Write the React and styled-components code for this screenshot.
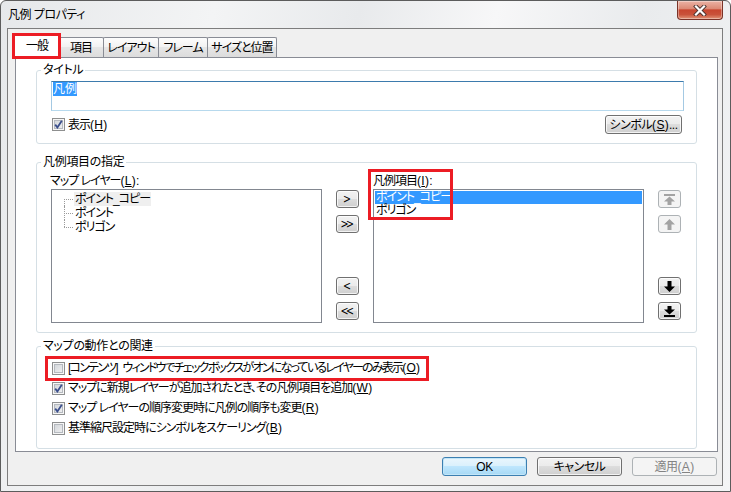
import styled, { createGlobalStyle, css } from 'styled-components'

const GlobalStyle = createGlobalStyle`
  html, body {
    margin: 0;
    padding: 0;
    background: #fff;
  }
  body {
    font-family: "Liberation Sans", "Noto Sans CJK JP", sans-serif;
    font-size: 12px;
    font-feature-settings: "palt";
    letter-spacing: -1px;
    color: #000;
  }
  * {
    box-sizing: border-box;
  }
`

const Window = styled.div`
  position: relative;
  width: 731px;
  height: 492px;
  display: flex;
  flex-direction: column;
  padding: 0 7px 5px 6px;
  border: 1px solid #5c5c5c;
  border-radius: 6px 6px 0 0;
  background: linear-gradient(105deg, #e6e8ea 0%, #f3f4f5 25%, #e8eaec 42%, #f7f7f8 58%, #e9ebed 75%, #f4f5f6 100%);
`

const TitleBar = styled.div`
  height: 27px;
  display: flex;
  justify-content: space-between;
  align-items: flex-start;
`

const Title = styled.div`
  margin: 7px 0 0 1px;
  line-height: 14px;
  letter-spacing: -0.5px;
`

const CloseButton = styled.div`
  width: 46px;
  height: 19px;
  display: flex;
  align-items: center;
  justify-content: center;
  border: 1px solid #7a3328;
  border-top: none;
  border-radius: 0 0 4px 4px;
  background: linear-gradient(#ebb3a5 0%, #dc8a76 42%, #c8462f 50%, #c9523a 75%, #e19477 100%);
  box-shadow: inset 0 0 0 1px rgba(255, 255, 255, 0.35);
`

const Client = styled.div`
  flex: 1;
  display: flex;
  flex-direction: column;
  padding: 6px 4px 0 7px;
  border: 1px solid #7d7d7d;
  background: #f0f0f0;
`

const TabRow = styled.div`
  position: relative;
  z-index: 1;
  height: 22px;
  display: flex;
  align-items: flex-end;
`

const Tab = styled.div`
  position: relative;
  width: ${p => p.$w}px;
  height: 20px;
  display: flex;
  align-items: center;
  justify-content: center;
  margin-left: -1px;
  border: 1px solid #898c95;
  border-bottom: none;
  border-radius: 2px 2px 0 0;
  background: linear-gradient(#fdfdfd, #f1f1f1 50%, #e6e6e6 50%, #dcdcdc);
  line-height: 14px;
  white-space: nowrap;

  ${p => p.$active && css`
    z-index: 2;
    height: 23px;
    margin: 0 -2px -1px -2px;
    padding-bottom: 2px;
    background: #fff;
  `}
`

const Panel = styled.div`
  height: 395px;
  display: flex;
  flex-direction: column;
  padding: 5px 20px 0;
  border: 1px solid #898c95;
  background: #fff;
`

const Group = styled.fieldset`
  margin: ${p => p.$top || 0}px 0 0;
  padding: 0;
  min-inline-size: 0;
  border: 1px solid #d5dfe5;
  border-radius: 3px;
`

const Legend = styled.legend`
  margin-left: 4px;
  padding: 0 2px;
  line-height: 14px;
  letter-spacing: -0.3px;
`

const GroupBody = styled.div`
  padding: ${p => p.$pad};
`

const TextBox = styled.div`
  height: 30px;
  padding: 1px;
  border: 1px solid;
  border-color: #3d7bad #a4c9e3 #b7d9ed #a4c9e3;
  background: #fff;
  line-height: 12px;
  letter-spacing: 0;
`

const Selected = styled.span`
  background: #3399ff;
  color: #fff;
`

const ShowRow = styled.div`
  height: 19px;
  margin-top: 4px;
  padding: 0 2px 0 1px;
  display: flex;
  align-items: center;
  justify-content: space-between;
`

const CheckLabel = styled.label`
  display: inline-flex;
  align-items: center;
  gap: 3px;
  line-height: 14px;
  white-space: nowrap;
  letter-spacing: ${p => (p.$tight ? '-1.8px' : 'inherit')};
`

const CheckBoxFrame = styled.span`
  width: 13px;
  height: 13px;
  flex: none;
  display: flex;
  border: 1px solid #8e8f8f;
  background: linear-gradient(135deg, #cdd1d6, #f4f4f4);
  box-shadow: inset 0 0 0 1px #f6f6f6, inset 0 0 0 2px #b5b9bf;
`

const Latin = styled.span`
  letter-spacing: 0.3px;
`

const Button = styled.button`
  width: ${p => p.$w}px;
  height: ${p => p.$h || 19}px;
  padding: 0;
  display: flex;
  align-items: center;
  justify-content: center;
  font: inherit;
  font-feature-settings: "palt";
  letter-spacing: -0.5px;
  line-height: 14px;
  color: #000;
  border: 1px solid #707070;
  border-radius: 3px;
  background: linear-gradient(#f2f2f2, #ebebeb 50%, #dddddd 50%, #cfcfcf);
  box-shadow: inset 0 0 0 1px rgba(255, 255, 255, 0.75);

  ${p => p.$default && css`
    border-color: #3c7fb1;
    background: linear-gradient(#eaf6fd, #d9f0fc 50%, #bee6fd 50%, #a7d9f5);
    box-shadow: inset 0 0 0 1px #c2e6f8;
  `}

  ${p => p.disabled && css`
    color: #838383;
    border-color: #adb2b5;
    background: #f4f4f4;
    box-shadow: none;
  `}
`

const ListsGrid = styled.div`
  display: grid;
  grid-template-columns: 271px 23px 271px 23px;
  grid-template-rows: 15px 134px;
  column-gap: 14px;
`

const FieldLabel = styled.div`
  grid-column: ${p => p.$col};
  grid-row: 1;
  margin-left: ${p => p.$shift || 0}px;
  line-height: 15px;
  white-space: nowrap;
`

const ListBox = styled.div`
  grid-column: ${p => p.$col};
  grid-row: 2;
  padding: ${p => p.$pad};
  border: 1px solid #828790;
  background: #fff;
`

const Tree = styled.div`
  padding-left: 12px;
`

const TreeItem = styled.div`
  position: relative;
  height: 14px;
  padding-left: 10px;
  line-height: 14px;
  white-space: nowrap;

  &::before {
    content: '';
    position: absolute;
    left: 0;
    top: 7px;
    width: 9px;
    border-top: 1px dotted #9a9a9a;
  }

  &::after {
    content: '';
    position: absolute;
    left: 0;
    top: 0;
    bottom: 0;
    border-left: 1px dotted #9a9a9a;
  }

  &:first-child::after {
    top: 7px;
  }

  &:last-child::after {
    bottom: 7px;
  }
`

const TreeText = styled.span`
  padding: 0 1px;
  background: ${p => (p.$selected ? '#efefef' : 'transparent')};
`

const ListItem = styled.div`
  height: 13px;
  padding-left: 1px;
  line-height: 13px;
  white-space: nowrap;
  background: ${p => (p.$selected ? '#3399ff' : 'transparent')};
  color: ${p => (p.$selected ? '#fff' : '#000')};
`

const ButtonColumn = styled.div`
  grid-column: ${p => p.$col};
  grid-row: 2;
  display: flex;
  flex-direction: column;
  justify-content: space-between;
  padding: 1px 0 3px;
`

const ButtonPair = styled.div`
  display: flex;
  flex-direction: column;
  gap: 7px;
`

const Chevron = styled.span`
  font-family: "DejaVu Sans", sans-serif;
  font-size: 12px;
  transform: scaleX(0.8);
  letter-spacing: ${p => (p.$double ? '-3px' : '0')};
  margin: -1px ${p => (p.$double ? '3px' : '0')} 0 0;
`

const CheckRow = styled.div`
  height: 20px;
  display: flex;
  align-items: center;
`

const DialogButtons = styled.div`
  margin-top: 5px;
  padding-right: 1px;
  display: flex;
  justify-content: flex-end;
  gap: 10px;
`

const Mark = styled.div`
  position: absolute;
  left: ${p => p.$x}px;
  top: ${p => p.$y}px;
  width: ${p => p.$w}px;
  height: ${p => p.$h}px;
  border: 3px solid #ec1c24;
  pointer-events: none;
  z-index: 5;
`

const Key = ({ k }) => (
  <Latin>(<u>{k}</u>)</Latin>
)

const CheckBox = ({ checked }) => (
  <CheckBoxFrame>
    {checked && (
      <svg width="11" height="11" viewBox="0 0 11 11">
        <path d="M2.2 5.6 L4.4 8.4 L8.8 1.8" fill="none" stroke="#3b4f8c" strokeWidth="1.8" />
      </svg>
    )}
  </CheckBoxFrame>
)

const Check = ({ checked, tight, children }) => (
  <CheckLabel $tight={tight}>
    <CheckBox checked={checked} />
    <span>{children}</span>
  </CheckLabel>
)

const arrows = {
  top: (
    <>
      <rect x="1" y="1" width="11" height="2" />
      <polygon points="6.5,3.5 12,8.5 8.5,8.5 8.5,12 4.5,12 4.5,8.5 1,8.5" />
    </>
  ),
  up: <polygon points="6.5,1 12,6.5 8.5,6.5 8.5,12 4.5,12 4.5,6.5 1,6.5" />,
  down: <polygon points="4.5,1 8.5,1 8.5,6.5 12,6.5 6.5,12 1,6.5 4.5,6.5" />,
  bottom: (
    <>
      <polygon points="4.5,1 8.5,1 8.5,4.5 12,4.5 6.5,9.5 1,4.5 4.5,4.5" />
      <rect x="1" y="10" width="11" height="2" />
    </>
  ),
}

const MoveButton = ({ dir, disabled }) => (
  <Button $w={23} $h={18} disabled={disabled}>
    <svg width="13" height="13" viewBox="0 0 13 13" fill={disabled ? '#a3a3a3' : '#000'}>
      {arrows[dir]}
    </svg>
  </Button>
)

const App = () => {
  return (
    <>
      <GlobalStyle />
      <Window>
        <TitleBar>
          <Title>凡例 プロパティ</Title>
          <CloseButton>
            <svg width="14" height="11" viewBox="0 0 14 11">
              <path d="M3 1.5 L11 9.5 M11 1.5 L3 9.5" stroke="#4b3430" strokeWidth="4" strokeLinecap="square" />
              <path d="M3 1.5 L11 9.5 M11 1.5 L3 9.5" stroke="#fff" strokeWidth="2.2" strokeLinecap="square" />
            </svg>
          </CloseButton>
        </TitleBar>

        <Client>
          <TabRow>
            <Tab $active $w={48}>一般</Tab>
            <Tab $w={46}>項目</Tab>
            <Tab $w={56}>レイアウト</Tab>
            <Tab $w={50}>フレーム</Tab>
            <Tab $w={70}>サイズと位置</Tab>
          </TabRow>

          <Panel>
            <Group>
              <Legend>タイトル</Legend>
              <GroupBody $pad="4px 12px 9px 14px">
                <TextBox>
                  <Selected>凡例</Selected>
                </TextBox>
                <ShowRow>
                  <Check checked>表示<Key k="H" /></Check>
                  <Button $w={77}>シンボル<Key k="S" />...</Button>
                </ShowRow>
              </GroupBody>
            </Group>

            <Group $top={11}>
              <Legend>凡例項目の指定</Legend>
              <GroupBody $pad="5px 0 9px 14px">
                <ListsGrid>
                  <FieldLabel $col={1} $shift={-1}>マップ レイヤー<Key k="L" />:</FieldLabel>
                  <ListBox $col={1} $pad="2px 0 0">
                    <Tree>
                      <TreeItem><TreeText $selected>ポイント_コピー</TreeText></TreeItem>
                      <TreeItem><TreeText>ポイント</TreeText></TreeItem>
                      <TreeItem><TreeText>ポリゴン</TreeText></TreeItem>
                    </Tree>
                  </ListBox>

                  <ButtonColumn $col={2}>
                    <ButtonPair>
                      <Button $w={23} $h={18}><Chevron>&gt;</Chevron></Button>
                      <Button $w={23} $h={18}><Chevron $double>&gt;&gt;</Chevron></Button>
                    </ButtonPair>
                    <ButtonPair>
                      <Button $w={23} $h={18}><Chevron>&lt;</Chevron></Button>
                      <Button $w={23} $h={18}><Chevron $double>&lt;&lt;</Chevron></Button>
                    </ButtonPair>
                  </ButtonColumn>

                  <FieldLabel $col={3}>凡例項目<Key k="I" />:</FieldLabel>
                  <ListBox $col={3} $pad="1px">
                    <ListItem $selected>ポイント_コピー</ListItem>
                    <ListItem>ポリゴン</ListItem>
                  </ListBox>

                  <ButtonColumn $col={4}>
                    <ButtonPair>
                      <MoveButton dir="top" disabled />
                      <MoveButton dir="up" disabled />
                    </ButtonPair>
                    <ButtonPair>
                      <MoveButton dir="down" />
                      <MoveButton dir="bottom" />
                    </ButtonPair>
                  </ButtonColumn>
                </ListsGrid>
              </GroupBody>
            </Group>

            <Group $top={6}>
              <Legend>マップの動作との関連</Legend>
              <GroupBody $pad="5px 0 10px 15px">
                <CheckRow>
                  <Check tight>[コンテンツ<Latin>] </Latin>ウィンドウでチェックボックスがオンになっているレイヤーのみ表示<Key k="O" /></Check>
                </CheckRow>
                <CheckRow>
                  <Check checked>マップに新規レイヤーが追加されたとき、その凡例項目を追加<Key k="W" /></Check>
                </CheckRow>
                <CheckRow>
                  <Check checked>マップ レイヤーの順序変更時に凡例の順序も変更<Key k="R" /></Check>
                </CheckRow>
                <CheckRow>
                  <Check>基準縮尺設定時にシンボルをスケーリング<Key k="B" /></Check>
                </CheckRow>
              </GroupBody>
            </Group>
          </Panel>

          <DialogButtons>
            <Button $w={85} $default>OK</Button>
            <Button $w={85}>キャンセル</Button>
            <Button $w={85} disabled>適用<Key k="A" /></Button>
          </DialogButtons>
        </Client>

        <Mark $x={11} $y={32} $w={49} $h={26} />
        <Mark $x={367} $y={168} $w={85} $h={51} />
        <Mark $x={44} $y={355} $w={384} $h={25} />
      </Window>
    </>
  )
}

export default App
